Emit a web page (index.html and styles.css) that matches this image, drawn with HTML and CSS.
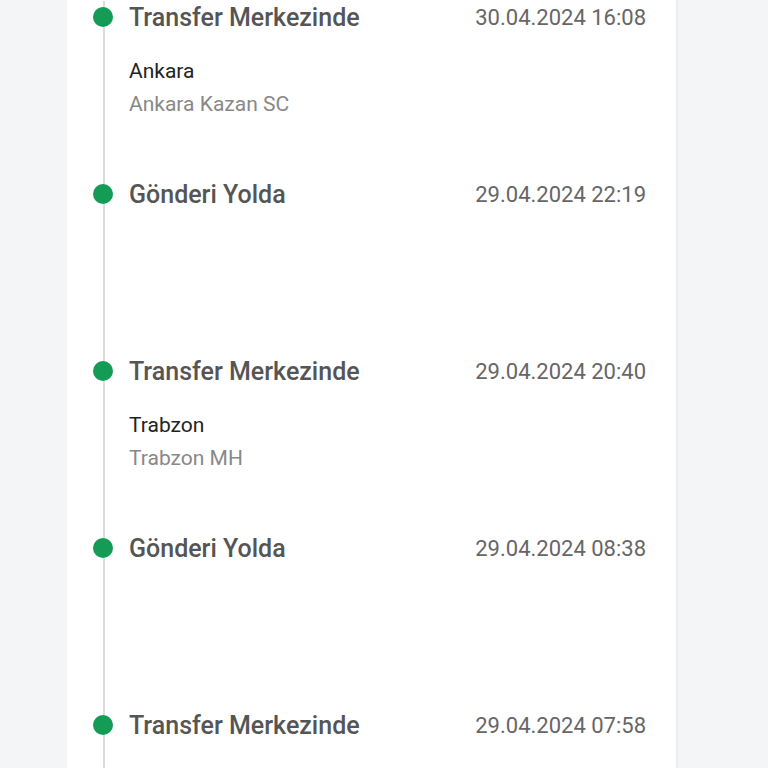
FILE: index.html
```html
<!DOCTYPE html>
<html lang="tr">
<head>
    <meta charset="UTF-8">
    <title>Gönderi Takibi</title>
    <link rel="stylesheet" href="styles.css">
</head>
<body>
    <div class="card">
        <ul class="timeline">
            <li class="event">
                <span class="dot"></span>
                <div class="event-head">
                    <span class="event-title">Transfer Merkezinde</span>
                    <span class="event-date">30.04.2024 16:08</span>
                </div>
                <div class="event-city">Ankara</div>
                <div class="event-place">Ankara Kazan SC</div>
            </li>
            <li class="event">
                <span class="dot"></span>
                <div class="event-head">
                    <span class="event-title">Gönderi Yolda</span>
                    <span class="event-date">29.04.2024 22:19</span>
                </div>
            </li>
            <li class="event">
                <span class="dot"></span>
                <div class="event-head">
                    <span class="event-title">Transfer Merkezinde</span>
                    <span class="event-date">29.04.2024 20:40</span>
                </div>
                <div class="event-city">Trabzon</div>
                <div class="event-place">Trabzon MH</div>
            </li>
            <li class="event">
                <span class="dot"></span>
                <div class="event-head">
                    <span class="event-title">Gönderi Yolda</span>
                    <span class="event-date">29.04.2024 08:38</span>
                </div>
            </li>
            <li class="event">
                <span class="dot"></span>
                <div class="event-head">
                    <span class="event-title">Transfer Merkezinde</span>
                    <span class="event-date">29.04.2024 07:58</span>
                </div>
                <div class="event-city">Trabzon</div>
                <div class="event-place">Trabzon MH</div>
            </li>
        </ul>
    </div>
</body>
</html>
```

FILE: styles.css
```css
html, body {
    margin: 0;
    padding: 0;
    background: #f4f5f7;
    font-family: Roboto, "Liberation Sans", sans-serif;
    height: 768px;
    overflow: hidden;
}

/* white card, page is scrolled down a bit */
.card {
    margin-left: 67px;
    width: 611px;
    border-right: 2px solid #ebecef;
    background: #fff;
    padding: 1px 30px 0 36px;
    box-sizing: border-box;
    height: 900px;
}

.timeline {
    list-style: none;
    margin: 0;
    padding: 0;
    border-left: 2px solid #dcdcdc;
}

.event {
    position: relative;
    height: 177px;
    padding-left: 24px;
}

.dot {
    position: absolute;
    left: -12px;
    top: 6px;
    width: 20px;
    height: 20px;
    border-radius: 50%;
    background: #149b55;
}

.event-head {
    display: flex;
    justify-content: space-between;
    align-items: center;
    height: 32px;
}

.event-title {
    font-size: 25px;
    font-weight: 500;
    color: #555;
}

.event-date {
    font-size: 22px;
    color: #666;
}

.event-city {
    margin-top: 22px;
    font-size: 21px;
    color: #222;
    line-height: 33px;
}

.event-place {
    font-size: 21px;
    color: #888;
    line-height: 33px;
}
```
